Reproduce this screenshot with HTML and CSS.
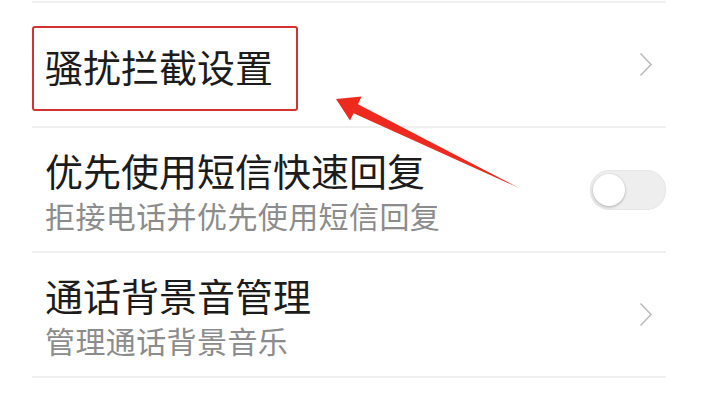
FILE: index.html
```html
<!DOCTYPE html>
<html lang="zh">
<head>
<meta charset="utf-8">
<link rel="stylesheet" href="styles.css">
</head>
<body>
<div class="page">
  <ul class="list">
    <li class="row row-first">
      <div class="highlight"><span class="title">骚扰拦截设置</span></div>
      <svg class="chevron" width="14" height="26" viewBox="0 0 14 26"><path d="M1.5 1.5 L12 12.5 L1.5 23.5" fill="none" stroke="#bdbdbd" stroke-width="1.6"/></svg>
    </li>
    <li class="row">
      <div class="text">
        <div class="title">优先使用短信快速回复</div>
        <div class="sub">拒接电话并优先使用短信回复</div>
      </div>
      <div class="toggle"><div class="knob"></div></div>
    </li>
    <li class="row">
      <div class="text">
        <div class="title">通话背景音管理</div>
        <div class="sub">管理通话背景音乐</div>
      </div>
      <svg class="chevron" width="14" height="26" viewBox="0 0 14 26"><path d="M1.5 1.5 L12 12.5 L1.5 23.5" fill="none" stroke="#bdbdbd" stroke-width="1.6"/></svg>
    </li>
  </ul>
  <svg class="arrow" width="701" height="400" viewBox="0 0 701 400">
    <polygon points="336,99 361.5,96.5 358,104.2 519,188 353.6,113.2 350,120.4" fill="#ee2a1f"/>
  </svg>
</div>
</body>
</html>
```

FILE: styles.css
```css
html, body {
  margin: 0;
  padding: 0;
  background: #ffffff;
}
body {
  font-family: "Noto Sans CJK SC", "Noto Sans", sans-serif;
  width: 701px;
  height: 400px;
  overflow: hidden;
}
.page {
  position: relative;
  width: 701px;
  height: 400px;
  padding-top: 1px;
  box-sizing: border-box;
}
.list {
  list-style: none;
  margin: 0 35px 0 32px;
  padding: 0;
  border-top: 2px solid #efefef;
}
.row {
  height: 123px;
  border-bottom: 2px solid #efefef;
  display: flex;
  align-items: center;
  justify-content: space-between;
}
.highlight {
  width: 251px;
  height: 75px;
  border: 2px solid #d23232;
  border-radius: 3px;
  display: flex;
  align-items: center;
  padding-left: 11px;
  padding-bottom: 6px;
  box-sizing: content-box;
  margin-top: 8px;
}
.highlight .title {
  line-height: 48px;
}
.text {
  padding-left: 13px;
  padding-top: 3px;
}
.title {
  font-size: 38px;
  line-height: 48px;
  color: #1c1c1c;
}
.sub {
  font-size: 30px;
  line-height: 42px;
  color: #8c8c8c;
  letter-spacing: 0.4px;
}
.chevron {
  margin-right: 13px;
  display: block;
}
.toggle {
  width: 72px;
  height: 38px;
  border-radius: 19px;
  background: #eeeeee;
  border: 1px solid #e6e6e6;
  display: flex;
  align-items: center;
  padding-left: 2px;
  box-sizing: content-box;
  margin-top: 1px;
}
.knob {
  width: 32px;
  height: 32px;
  border-radius: 50%;
  background: #ffffff;
  box-shadow: 0 1px 3px rgba(0,0,0,0.28);
}
.arrow {
  position: absolute;
  left: 0;
  top: 0;
  pointer-events: none;
}
```
